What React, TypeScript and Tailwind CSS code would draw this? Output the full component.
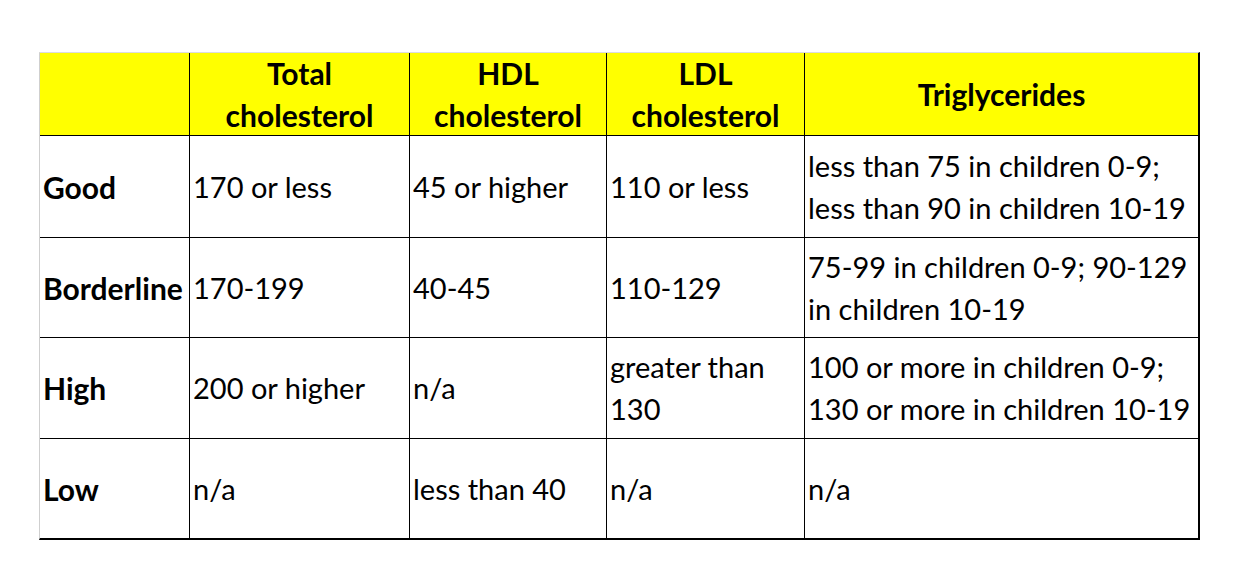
const headers: string[][] = [[], ['Total', 'cholesterol'], ['HDL', 'cholesterol'], ['LDL', 'cholesterol'], ['Triglycerides']]

const rows: string[][][] = [
  [['Good'], ['170 or less'], ['45 or higher'], ['110 or less'], ['less than 75 in children 0-9;', 'less than 90 in children 10-19']],
  [['Borderline'], ['170-199'], ['40-45'], ['110-129'], ['75-99 in children 0-9; 90-129', 'in children 10-19']],
  [['High'], ['200 or higher'], ['n/a'], ['greater than', '130'], ['100 or more in children 0-9;', '130 or more in children 10-19']],
  [['Low'], ['n/a'], ['less than 40'], ['n/a'], ['n/a']],
]

export default function App() {
  return (
    <div className="min-h-screen bg-white pt-[52px] pl-[39px] text-black font-['Lato',sans-serif]">
      <div className="grid w-[1161px] grid-cols-[150px_220px_197px_198px_393px] grid-rows-[83px_102px_100px_101px_99px] border-l border-t border-l-[#cfcfcf] border-t-[#dcdcdc] border-r-2 border-b-2 border-r-black border-b-black">
        {headers.map((h, i) => (
          <div
            key={i}
            className={`flex flex-col items-center justify-center bg-[#ffff00] border-b border-black text-center text-[30px] font-bold leading-[42px] whitespace-nowrap ${i < 4 ? 'border-r' : ''}`}
          >
            {h.map((l) => (
              <span key={l}>{l}</span>
            ))}
          </div>
        ))}
        {rows.map((r, ri) =>
          r.map((c, ci) => (
            <div
              key={ri + '-' + ci}
              className={`flex flex-col justify-center pl-[3px] whitespace-nowrap leading-[42px] border-black ${ci < 4 ? 'border-r' : ''} ${ri < 3 ? 'border-b' : ''} ${ci === 0 ? 'font-bold text-[30px]' : 'text-[29px]'}`}
            >
              {c.map((l) => (
                <span key={l}>{l}</span>
              ))}
            </div>
          )),
        )}
      </div>
    </div>
  )
}
